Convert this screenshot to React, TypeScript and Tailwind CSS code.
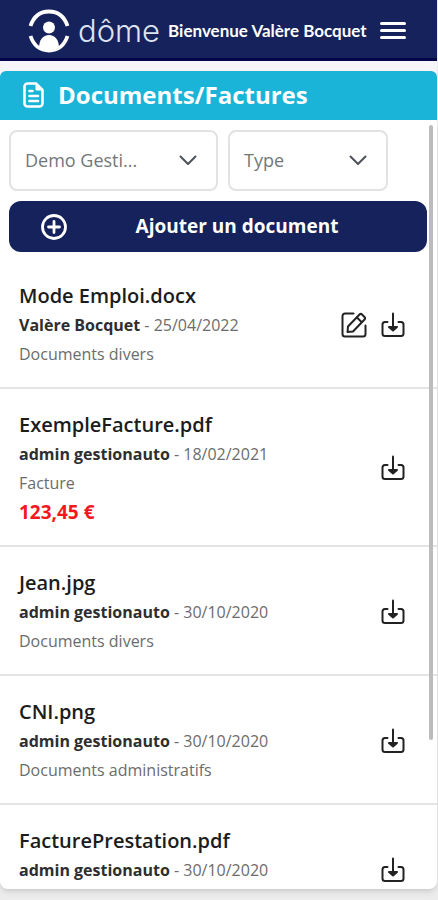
import type { ReactNode } from 'react'

type Doc = {
  name: string
  author: string
  date: string
  category: string
  amount?: string
  editable?: boolean
}

const DOCUMENTS: Doc[] = [
  { name: 'Mode Emploi.docx', author: 'Valère Bocquet', date: '25/04/2022', category: 'Documents divers', editable: true },
  { name: 'ExempleFacture.pdf', author: 'admin gestionauto', date: '18/02/2021', category: 'Facture', amount: '123,45 €' },
  { name: 'Jean.jpg', author: 'admin gestionauto', date: '30/10/2020', category: 'Documents divers' },
  { name: 'CNI.png', author: 'admin gestionauto', date: '30/10/2020', category: 'Documents administratifs' },
  { name: 'FacturePrestation.pdf', author: 'admin gestionauto', date: '30/10/2020', category: '' },
]

function LogoMark() {
  return (
    <svg viewBox="0 0 42 44" className="h-11 w-[42px] shrink-0" fill="none" aria-hidden="true">
      <path d="M2.500 17C5.500 8 12 2.500 21 2.500S36.500 8 39.500 17" stroke="white" strokeWidth="3.800" />
      <path d="M2.500 27C5.500 36 12 41.500 21 41.500S36.500 36 39.500 27" stroke="white" strokeWidth="3.800" />
      <circle cx="21" cy="18.500" r="6" fill="white" />
      <path d="M11 39C11 31 15 26 21 26s10 5 10 13c-3 2.500-6.500 3.500-10 3.500S14 41.500 11 39Z" fill="white" />
    </svg>
  )
}

function FileIcon() {
  return (
    <svg viewBox="0 0 22 26" className="h-[26px] w-[22px] shrink-0" fill="none" stroke="white" strokeWidth="2.600" strokeLinejoin="round" strokeLinecap="round" aria-hidden="true">
      <path d="M13 1.500H4.500a3 3 0 0 0-3 3v17a3 3 0 0 0 3 3h12a3 3 0 0 0 3-3V8z" />
      <path d="M13 1.500V8h6.500z" fill="white" strokeWidth="1" />
      <path d="M6.500 9h3M6.500 14h8.500M6.500 19h8.500" />
    </svg>
  )
}

function EditIcon() {
  return (
    <svg viewBox="0 0 26 26" className="size-[26px]" fill="none" stroke="currentColor" strokeWidth="2" strokeLinejoin="round" strokeLinecap="round" aria-hidden="true">
      <path d="M12.500 1.500H4a2.500 2.500 0 0 0-2.500 2.500v18A2.500 2.500 0 0 0 4 24.500h18a2.500 2.500 0 0 0 2.500-2.500v-8.500" />
      <path d="m7 14.500 11.500-12a1.800 1.800 0 0 1 2.500 0l2.500 2.500a1.800 1.800 0 0 1 0 2.500l-11.500 12L6.500 20z" />
      <path d="m16 5.500 4.500 4.500" />
    </svg>
  )
}

function DownloadIcon() {
  return (
    <svg viewBox="0 0 24 26" className="h-[26px] w-6" fill="none" stroke="currentColor" strokeWidth="2" strokeLinejoin="round" strokeLinecap="round" aria-hidden="true">
      <path d="M6.500 10H4A2.500 2.500 0 0 0 1.500 12.500v9A2.500 2.500 0 0 0 4 24h16a2.500 2.500 0 0 0 2.500-2.500v-9A2.500 2.500 0 0 0 20 10h-2.500" />
      <path d="M12 1.500V18" />
      <path d="m8 15 4 3.500 4-3.500z" fill="currentColor" />
    </svg>
  )
}

function FilterSelect({ label, width, children }: { label: string; width: string; children: ReactNode }) {
  return (
    <div className={`relative ${width}`}>
      <select
        aria-label={label}
        className="h-[61px] w-full appearance-none rounded-lg border-2 border-[#e0e2e4] bg-white pl-[14px] pr-12 text-[18px] text-[#72777b]"
      >
        {children}
      </select>
      <svg viewBox="0 0 18 11" className="pointer-events-none absolute right-[21px] top-[25px] h-[11px] w-[18px]" fill="none" stroke="#4b5258" strokeWidth="2" strokeLinecap="round" strokeLinejoin="round" aria-hidden="true">
        <path d="m1.500 1.500 7.500 7.500 7.500-7.500" />
      </svg>
    </div>
  )
}

function DocumentRow({ doc }: { doc: Doc }) {
  return (
    <li className="flex shrink-0 items-center justify-between border-b-2 border-[#e3e5e5] pb-[18px] pl-[19px] pr-8 pt-5">
      <div className="min-w-0">
        <h2 className="text-[20px] font-semibold leading-[31px] text-[#1c1c1c]">{doc.name}</h2>
        <p className="text-[16px] leading-[29px] text-[#6c6c6c]">
          <span className="font-bold text-[#2e2e2e]">{doc.author}</span> - {doc.date}
        </p>
        <p className="min-h-[29px] text-[16px] leading-[29px] text-[#6c6c6c]">{doc.category}</p>
        {doc.amount && <p className="text-[19px] font-bold leading-[29px] text-[#f3181c]">{doc.amount}</p>}
      </div>
      <div className="flex shrink-0 items-center gap-[14px] text-[#222]">
        {doc.editable && (
          <button type="button" aria-label={`Modifier ${doc.name}`}>
            <EditIcon />
          </button>
        )}
        <button type="button" aria-label={`Télécharger ${doc.name}`}>
          <DownloadIcon />
        </button>
      </div>
    </li>
  )
}

export default function App() {
  return (
    <div className="flex h-screen flex-col overflow-hidden bg-[#ececec] pr-px font-['Open_Sans',sans-serif]">
      <header className="flex h-[61px] shrink-0 items-center border-b-3 border-[#04064b] bg-[#15225b] pl-7 pr-[31px] pt-[3px] text-white">
        <a href="#" className="flex items-center gap-2">
          <LogoMark />
          <span className="font-['Inter',sans-serif] text-[31px] font-light leading-10 text-[#dfe2f0]">dôme</span>
        </a>
        <span className="ml-2 whitespace-nowrap font-['Lato',sans-serif] text-[17px] font-bold">Bienvenue Valère Bocquet</span>
        <button type="button" aria-label="Menu" className="ml-auto flex w-[26px] flex-col gap-1">
          <span className="h-[3px] rounded-sm bg-white" />
          <span className="h-[3px] rounded-sm bg-white" />
          <span className="h-[3px] rounded-sm bg-white" />
        </button>
      </header>

      <div className="shrink-0 bg-[#f5f5fa] pt-[10px]">
        <div className="flex h-[49px] items-center gap-[13px] rounded-t-md bg-[#19b4d8] pb-[2px] pl-[23px]">
          <FileIcon />
          <h1 className="text-[24px] font-bold leading-8 text-white">Documents/Factures</h1>
        </div>
      </div>

      <main className="relative mb-[11px] flex min-h-0 flex-1 flex-col overflow-hidden rounded-b-lg bg-white shadow-md">
        <div className="flex shrink-0 flex-col gap-[10px] pb-2 pl-[9px] pr-[10px] pt-[10px]">
          <div className="flex gap-[10px]">
            <FilterSelect label="Gestionnaire" width="w-1/2">
              <option>Demo Gesti...</option>
            </FilterSelect>
            <FilterSelect label="Type de document" width="w-40">
              <option>Type</option>
            </FilterSelect>
          </div>
          <button type="button" className="flex h-[51px] items-center rounded-xl bg-[#15225b] pl-8 text-white">
            <svg viewBox="0 0 26 26" className="size-[26px]" fill="none" stroke="white" strokeWidth="2.800" strokeLinecap="round" aria-hidden="true">
              <circle cx="13" cy="13" r="11.500" />
              <path d="M13 7.500v11M7.500 13h11" />
            </svg>
            <span className="flex-1 pr-5 text-center text-[19px] font-bold">Ajouter un document</span>
          </button>
        </div>

        <ul className="flex min-h-0 flex-1 flex-col overflow-y-auto [scrollbar-width:none]">
          {DOCUMENTS.map((doc) => (
            <DocumentRow key={doc.name} doc={doc} />
          ))}
        </ul>

        <div className="absolute right-1 top-[5px] h-4/5 w-1 rounded-sm bg-[#bcbcbc]" />
      </main>
    </div>
  )
}
